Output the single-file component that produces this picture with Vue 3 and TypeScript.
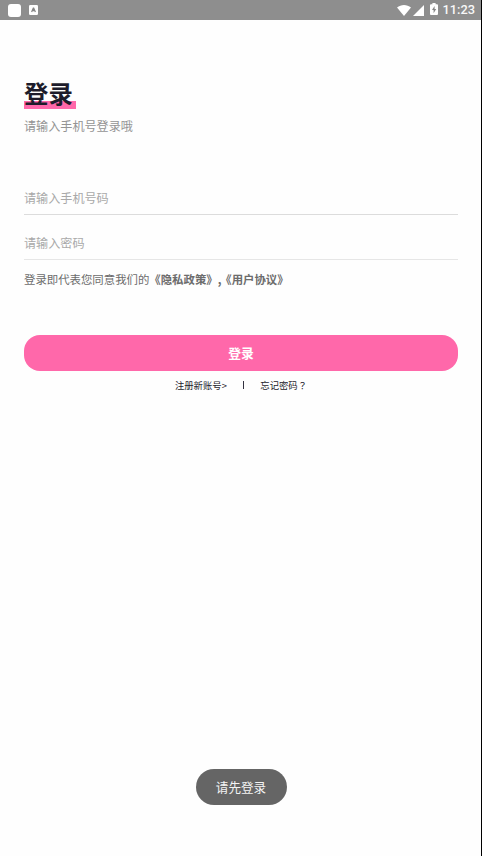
<script setup lang="ts">
import { ref } from 'vue'

const phone = ref('')
const password = ref('')
const time = '11:23'
const toast = '请先登录'
</script>

<template>
  <div class="screen">
    <header class="status">
      <div class="left">
        <span class="square"></span>
        <svg class="letter" viewBox="0 0 9 10">
          <rect width="9" height="10" rx="1.3" fill="#fff" />
          <path d="M2.600 7 4.300 3h.4l1.700 4M3.200 5.700h2.600" fill="none" stroke="#858585" stroke-width="1.200" />
        </svg>
      </div>
      <div class="right">
        <svg class="wifi" viewBox="0 0 14 11"><path d="M0 2.6C4-.8 10-.8 14 2.600L7 11z" fill="#fff" /></svg>
        <svg class="signal" viewBox="0 0 11 11"><path d="M11 0v11H0z" fill="#fff" /></svg>
        <svg class="battery" viewBox="0 0 8 12">
          <path d="M2.400 0h3.200v1.300H7q1 0 1 1V11q0 1-1 1H1q-1 0-1-1V2.300q0-1 1-1h1.400z" fill="#fff" />
          <path d="M4.600 3 2 7.100h1.600V10.300L6.200 6H4.600z" fill="#858585" />
        </svg>
        <span class="time">{{ time }}</span>
      </div>
    </header>

    <main class="content">
      <h1 class="title"><span>登录</span></h1>
      <p class="subtitle">请输入手机号登录哦</p>
      <form class="form" @submit.prevent>
        <input v-model="phone" class="field" type="tel" placeholder="请输入手机号码" />
        <input v-model="password" class="field second" type="password" placeholder="请输入密码" />
        <p class="terms">登录即代表您同意我们的<b>《隐私政策》</b><b class="comma">,</b><b>《用户协议》</b></p>
        <button class="submit" type="submit">登录</button>
      </form>
      <nav class="links">
        <a>注册新账号&gt;</a>
        <span class="divider"></span>
        <a>忘记密码<span class="mark">？</span></a>
      </nav>
    </main>

    <div class="toast">{{ toast }}</div>
  </div>
</template>

<style>
body {
  margin: 0;
}
</style>

<style scoped>
.screen {
  box-sizing: border-box;
  width: 482px;
  height: 856px;
  display: flex;
  flex-direction: column;
  overflow: hidden;
  background: #fefefe;
  border-right: 1px solid #000;
  color: #1d1c2b;
  font-family: 'Noto Sans CJK SC', sans-serif;
}
.status {
  height: 20px;
  flex: none;
  display: flex;
  justify-content: space-between;
  background: #8e8e8e;
  padding: 0 6px 0 8px;
}
.left,
.right {
  display: flex;
  align-items: center;
}
.square {
  width: 13px;
  height: 13px;
  margin-right: 8px;
  border-radius: 3px;
  background: #fff;
}
.letter {
  width: 9px;
  height: 10px;
}
.wifi {
  width: 14px;
  height: 11px;
}
.signal {
  width: 11px;
  height: 11px;
  margin-left: 2px;
}
.battery {
  width: 8px;
  height: 12px;
  margin: 0 5px 2px 6px;
}
.time {
  font: 500 12.8px/20px Roboto, sans-serif;
  color: #f8f8f8;
}
.content {
  padding: 55px 23px 0 24px;
}
.title {
  margin: 0;
  height: 36px;
  font-size: 24.4px;
  line-height: 36px;
  font-weight: 700;
}
.title span {
  display: inline-block;
  width: 52px;
  height: 34px;
  background: linear-gradient(#ff68aa, #ff68aa) bottom / 100% 8px no-repeat;
}
.subtitle {
  margin: 6px 0 0;
  font-size: 12.1px;
  line-height: 18px;
  color: #949494;
}
.form {
  margin-top: 47px;
  display: flex;
  flex-direction: column;
}
.field {
  box-sizing: border-box;
  width: 100%;
  height: 33px;
  padding: 0 0 1px;
  border: 0;
  border-bottom: 1px solid #dcdcdc;
  outline: 0;
  background: transparent;
  font: 12.1px 'Noto Sans CJK SC', sans-serif;
  color: #333;
}
.field::placeholder {
  color: #a9a9a9;
}
.second {
  margin-top: 12px;
  border-color: #e6e6e6;
}
.terms {
  margin: 10px 0 0;
  font-size: 11.4px;
  line-height: 18px;
  color: #6c6c6c;
  white-space: nowrap;
}
.comma {
  display: inline-block;
  width: 2.6px;
}
.submit {
  height: 35.5px;
  margin-top: 47px;
  padding: 0;
  border: 0;
  border-radius: 16px;
  background: #ff68aa;
  color: #fff;
  font: 700 12.8px/35px 'Noto Sans CJK SC', sans-serif;
}
.links {
  margin-top: 7.5px;
  display: flex;
  align-items: center;
  justify-content: center;
  font-size: 9.35px;
  line-height: 14px;
}
.mark {
  font-family: 'Noto Sans CJK TC', sans-serif;
}
.divider {
  width: 1px;
  height: 8px;
  margin: 0 16.5px 0 16px;
  background: #333240;
}
.toast {
  align-self: center;
  margin: auto 0 51.5px 1px;
  width: 91px;
  height: 36px;
  border-radius: 18px;
  background: #656565;
  color: #f4f4f4;
  text-align: center;
  font-size: 12.6px;
  line-height: 35.5px;
}
</style>
